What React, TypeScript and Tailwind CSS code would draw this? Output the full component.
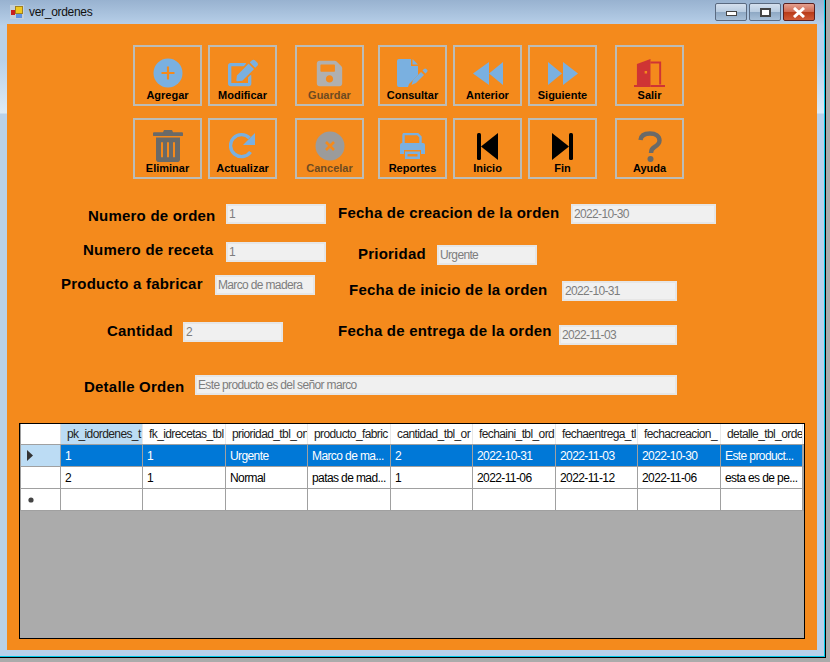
import React from "react";
import { FaEdit, FaSave } from "react-icons/fa";

const blue = "#7ab0e0";
const orange = "#f48a1c";

const PlusIcon = () => (
  <svg width="30" height="30" viewBox="0 0 30 30"><circle cx="15" cy="15" r="14.5" fill={blue} /><path d="M15 8.5v13M8.5 15h13" stroke={orange} strokeWidth="2.2" /></svg>
);
const TrashIcon = () => (
  <svg width="30" height="32" viewBox="0 0 30 34" preserveAspectRatio="none">
    <path d="M11 0h8l1 2.5h9a1 1 0 0 1 1 1v2a1 1 0 0 1-1 1H1a1 1 0 0 1-1-1v-2a1 1 0 0 1 1-1h9z" fill="#6a6a68" />
    <path d="M3 8h24v23a3 3 0 0 1-3 3H6a3 3 0 0 1-3-3z" fill="#6a6a68" />
    <path d="M9 13v16M15 13v16M21 13v16" stroke={orange} strokeWidth="2" />
  </svg>
);
const RedoIcon = () => (
  <svg width="28" height="28" viewBox="0 0 28 28">
    <path d="M21.5 20a11 11 0 1 1-1-14" fill="none" stroke={blue} strokeWidth="3.4" />
    <path d="M26 1v12H14z" fill={blue} />
  </svg>
);
const CancelIcon = () => (
  <svg width="30" height="30" viewBox="0 0 30 30"><circle cx="15" cy="15" r="14.5" fill="#9b9b9b" /><path d="M11 11l8 8M19 11l-8 8" stroke={orange} strokeWidth="2.6" /></svg>
);
const FileIcon = () => (
  <svg width="31" height="28" viewBox="0 0 31 28">
    <path d="M2 0h12v7h7v9l-9 9-1 3H2a2 2 0 0 1-2-2V2a2 2 0 0 1 2-2z" fill={blue} />
    <path d="M15.5 0l5.5 5.5h-5.5z" fill={blue} />
    <path d="M16 21l8-8 3 3-8 8-4.5 2z" fill={blue} />
    <path d="M25.5 11.5l1.5-1.5a1.6 1.6 0 0 1 2.3 0l.7.7a1.6 1.6 0 0 1 0 2.3l-1.5 1.5z" fill={blue} />
  </svg>
);
const BackIcon = () => (
  <svg width="30" height="23" viewBox="0 0 30 23"><path d="M0 11.5L16 0v23z" fill={blue} /><path d="M16 11.5L30 0v23z" fill={blue} /></svg>
);
const NextIcon = () => (
  <svg width="30" height="23" viewBox="0 0 30 23"><path d="M0 0l14 11.5L0 23z" fill={blue} /><path d="M15 0l15 11.5L15 23z" fill={blue} /></svg>
);
const DoorIcon = () => (
  <svg width="31" height="28" viewBox="0 0 32 28" preserveAspectRatio="none">
    <path d="M3 5l14-5v28H3z" fill="#cf3434" />
    <path d="M17 3.5h10v22" fill="none" stroke="#cf3434" strokeWidth="2" />
    <path d="M0 26h8v2H0zM17 26h15v2H17z" fill="#cf3434" />
    <rect x="11" y="12" width="2.5" height="2.5" fill={orange} />
  </svg>
);
const PrinterIcon = () => (
  <svg width="25" height="26" viewBox="0 0 25 26">
    <path d="M3.5 10V2a1 1 0 0 1 1-1h13l3 3v6" fill="none" stroke={blue} strokeWidth="2.4" />
    <path d="M2 10h21a2 2 0 0 1 2 2v9h-4v-4H4v4H0v-9a2 2 0 0 1 2-2z" fill={blue} />
    <path d="M5 18.5h15V26H5z" fill={blue} />
    <path d="M7.5 21h10v2.5h-10z" fill={orange} />
  </svg>
);
const StartIcon = () => (
  <svg width="21" height="27" viewBox="0 0 21 27"><rect x="0" y="0" width="4" height="27" rx="1.5" fill="#000" /><path d="M4 13.5L21 0v27z" fill="#000" /></svg>
);
const EndIcon = () => (
  <svg width="21" height="27" viewBox="0 0 21 27"><rect x="17" y="0" width="4" height="27" rx="1.5" fill="#000" /><path d="M0 0l17 13.5L0 27z" fill="#000" /></svg>
);
const HelpIcon = () => (
  <svg width="24" height="31" viewBox="0 0 24 31">
    <path d="M2.5 9C3 4.5 7 2.5 12 2.5c5.5 0 9.5 2.5 9.5 7 0 3.5-2.5 5-5 6.5-2.5 1.4-3.5 2.6-3.5 6" fill="none" stroke="#6a6a68" strokeWidth="4.4" />
    <circle cx="12.5" cy="28" r="3" fill="#6a6a68" />
  </svg>
);

type Btn = { label: string; icon: React.ReactNode; dim?: boolean };
const row1: Btn[][] = [
  [
    { label: "Agregar", icon: <PlusIcon /> },
    { label: "Modificar", icon: <FaEdit size={30} color={blue} /> },
  ],
  [{ label: "Guardar", icon: <FaSave size={29} color="#b0b0b0" />, dim: true }],
  [
    { label: "Consultar", icon: <FileIcon /> },
    { label: "Anterior", icon: <BackIcon /> },
    { label: "Siguiente", icon: <NextIcon /> },
  ],
  [{ label: "Salir", icon: <DoorIcon /> }],
];
const row2: Btn[][] = [
  [
    { label: "Eliminar", icon: <TrashIcon /> },
    { label: "Actualizar", icon: <RedoIcon /> },
  ],
  [{ label: "Cancelar", icon: <CancelIcon />, dim: true }],
  [
    { label: "Reportes", icon: <PrinterIcon /> },
    { label: "Inicio", icon: <StartIcon /> },
    { label: "Fin", icon: <EndIcon /> },
  ],
  [{ label: "Ayuda", icon: <HelpIcon /> }],
];

function ToolButton({ b }: { b: Btn }) {
  return (
    <div className="w-[69px] h-[61px] border-2 border-[#bcbcb6] flex flex-col items-center pt-[11px]">
      <div className="h-[30px] flex items-center justify-center">{b.icon}</div>
      <div className={`mt-[1px] text-[11px] leading-[13px] font-bold whitespace-nowrap ${b.dim ? "text-[#6e4a22]" : "text-black"}`}>{b.label}</div>
    </div>
  );
}

function ToolRow({ groups, className }: { groups: Btn[][]; className?: string }) {
  return (
    <div className={`flex ${className ?? ""}`}>
      {groups.map((g, i) => (
        <div key={i} className={`flex gap-[6px] ${i === 1 ? "mr-[14px]" : i === 3 ? "" : "mr-[18px]"}`}>
          {g.map((b) => <ToolButton key={b.label} b={b} />)}
        </div>
      ))}
    </div>
  );
}

function Field({ value, w }: { value: string; w: string }) {
  return (
    <div className={`${w} h-[20px] shrink-0 border-2 border-[#e6e6e6] bg-[#f0f0f0] text-[12px] leading-[16px] tracking-[-0.65px] pl-[1px] text-[#7d7d7d] whitespace-nowrap overflow-hidden`}>{value}</div>
  );
}

function Row({ children, className }: { children: React.ReactNode; className: string }) {
  return <div className={`flex items-start h-[20px] ${className}`}>{children}</div>;
}

function Label({ children, className }: { children: React.ReactNode; className: string }) {
  return <div className={`shrink-0 text-[15px] leading-[20px] tracking-[0.22px] font-bold text-black whitespace-nowrap ${className}`}>{children}</div>;
}

const headers = ["pk_idordenes_t", "fk_idrecetas_tbl", "prioridad_tbl_on", "producto_fabric", "cantidad_tbl_or", "fechaini_tbl_ord", "fechaentrega_tl", "fechacreacion_", "detalle_tbl_orde"];
const data = [
  ["1", "1", "Urgente", "Marco de ma...", "2", "2022-10-31", "2022-11-03", "2022-10-30", "Este product..."],
  ["2", "1", "Normal", "patas de mad...", "1", "2022-11-06", "2022-11-12", "2022-11-06", "esta es de pe..."],
  ["", "", "", "", "", "", "", "", ""],
];
const colW = ["w-[82px]", "w-[83px]", "w-[82px]", "w-[83px]", "w-[82px]", "w-[83px]", "w-[82px]", "w-[83px]", "w-[82px]"];

function Grid() {
  return (
    <div className="mt-[28px] ml-[12px] w-[786px] h-[216px] border border-black bg-[#ababab] overflow-hidden text-[12px] tracking-[-0.6px]">
      <div className="flex h-[20px] bg-white">
        <div className="w-[41px] shrink-0 border-l border-l-[#a0a0a0] border-r border-r-[#e0e0e0]" />
        {headers.map((h, i) => (
          <div key={h} className={`${colW[i]} shrink-0 overflow-hidden whitespace-nowrap pl-[6px] leading-[21px] text-[#222] border-r border-[#e8e8e8] ${i === 0 ? "bg-[#bcdcf4]" : ""}`}>{h}</div>
        ))}
      </div>
      {data.map((r, ri) => (
        <div key={ri} className={`flex border-t border-[#a0a0a0] ${ri === 2 ? "h-[23px] border-b" : "h-[22px]"}`}>
          <div className={`w-[41px] shrink-0 flex items-center pl-[5px] border-l border-l-[#a0a0a0] border-r border-r-[#a0a0a0] ${ri === 0 ? "bg-[#bcdcf4]" : "bg-white"}`}>
            {ri === 0 && <svg width="8" height="11" viewBox="0 0 8 11"><path d="M1 0l6 5.5-6 5.5z" fill="#333" /></svg>}
            {ri === 2 && <svg width="8" height="8" viewBox="0 0 8 8"><circle cx="5" cy="4" r="2.6" fill="#444" /></svg>}
          </div>
          {r.map((c, i) => (
            <div key={i} className={`${colW[i]} shrink-0 overflow-hidden whitespace-nowrap pl-[4px] pt-[1px] leading-[20px] border-r border-[#a0a0a0] ${ri === 0 ? "bg-[#0078d7] text-white" : "bg-white text-black"}`}>{c}</div>
          ))}
        </div>
      ))}
    </div>
  );
}

export default function App() {
  return (
    <div className="w-[830px] h-[662px] bg-[#ababab] overflow-hidden font-['Liberation_Sans',sans-serif]">
      <div className="w-[826px] h-[658px] border-r border-b border-black">
        <div className="w-[825px] h-[657px] border-r border-b border-[#00c8e8] pl-[7px] bg-[linear-gradient(to_bottom,#98b2d0_0px,#b9d1ea_26px,#b9d1ea_60px,#deebf6_113px,#b9d1ea_114px)]">
          <div className="h-[24px] -ml-[7px] pl-[10px] flex items-center relative">
            <div className="w-[14px] h-[14px] shrink-0 bg-[#c4d0dc]">
              <svg width="14" height="14" viewBox="0 0 14 14">
                <rect x="5.5" y="1.5" width="7" height="7" fill="#f0c820" stroke="#a08020" />
                <rect x="1" y="5" width="4" height="5" fill="#c82020" />
                <rect x="6" y="9" width="6" height="4" fill="#6090e0" />
              </svg>
            </div>
            <span className="ml-[5px] text-[12px] tracking-[-0.3px] text-[#111]">ver_ordenes</span>
            <div className="absolute left-[715px] top-[3px] flex gap-[2px]">
              <div className="w-[32px] h-[18px] rounded-[2px] border border-[#5a6a80] bg-[linear-gradient(to_bottom,#d4e0ee_0%,#b8cce0_50%,#8ea8c4_51%,#a8c0d8_100%)] flex items-center justify-center"><div className="w-[11px] h-[5px] mt-[3px] bg-white border border-[#444]" /></div>
              <div className="w-[32px] h-[18px] rounded-[2px] border border-[#5a6a80] bg-[linear-gradient(to_bottom,#d4e0ee_0%,#b8cce0_50%,#8ea8c4_51%,#a8c0d8_100%)] flex items-center justify-center"><div className="w-[11px] h-[9px] bg-white border-2 border-[#444]" /></div>
              <div className="w-[32px] h-[18px] rounded-[2px] border border-[#5a2020] bg-[linear-gradient(to_bottom,#e4a090_0%,#d06850_50%,#b83a18_51%,#d05a38_100%)] flex items-center justify-center"><svg width="14" height="11" viewBox="0 0 14 11"><path d="M2 1l10 9M12 1L2 10" stroke="#fff" strokeWidth="3" /></svg></div>
            </div>
          </div>
          <div className="w-[810px] h-[626px] bg-[#f48a1c] pt-[21px] flex flex-col">
            <div className="pl-[126px]">
              <ToolRow groups={row1} />
              <ToolRow groups={row2} className="mt-[12px]" />
            </div>
            <div className="flex mt-[25px]">
              <div className="w-[331px] shrink-0">
                <Row className="ml-[81px]"><Label className="w-[138px] mt-[2px]">Numero de orden</Label><Field value="1" w="w-[100px]" /></Row>
                <Row className="ml-[76px] mt-[18px]"><Label className="w-[143px] -mt-[2px]">Numero de receta</Label><Field value="1" w="w-[100px]" /></Row>
                <Row className="ml-[54px] mt-[13px]"><Label className="w-[154px] -mt-[1px]">Producto a fabricar</Label><Field value="Marco de madera" w="w-[100px]" /></Row>
                <Row className="ml-[100px] mt-[27px]"><Label className="w-[76px] -mt-[1px]">Cantidad</Label><Field value="2" w="w-[100px]" /></Row>
              </div>
              <div>
                <Row className=""><Label className="w-[233px] -mt-[1px]">Fecha de creacion de la orden</Label><Field value="2022-10-30" w="w-[145px]" /></Row>
                <Row className="ml-[20px] mt-[21px]"><Label className="w-[79px] -mt-[1px]">Prioridad</Label><Field value="Urgente" w="w-[100px]" /></Row>
                <Row className="ml-[11px] mt-[16px]"><Label className="w-[213px] -mt-[1px]">Fecha de inicio de la orden</Label><Field value="2022-10-31" w="w-[115px]" /></Row>
                <Row className="mt-[24px]"><Label className="w-[221px] -mt-[4px]">Fecha de entrega de la orden</Label><Field value="2022-11-03" w="w-[118px]" /></Row>
              </div>
            </div>
            <Row className="ml-[77px] mt-[30px]"><Label className="w-[111px] mt-[2px]">Detalle Orden</Label><Field value="Este producto es del señor marco" w="w-[482px]" /></Row>
            <Grid />
          </div>
        </div>
      </div>
    </div>
  );
}
